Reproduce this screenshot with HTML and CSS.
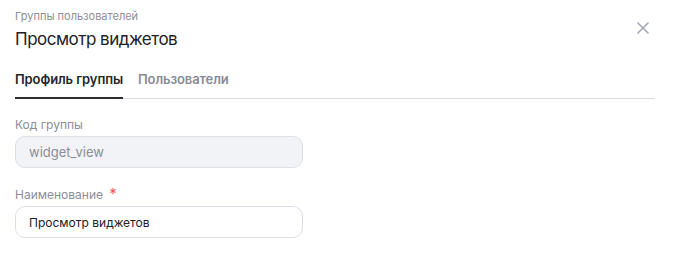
FILE: index.html
```html
<!DOCTYPE html>
<html lang="ru">
<head>
<meta charset="utf-8">
<link rel="stylesheet" href="styles.css">
</head>
<body>
<div class="dialog">
  <header class="head">
    <div class="titles">
      <div class="crumb">Группы пользователей</div>
      <h1 class="title">Просмотр виджетов</h1>
    </div>
    <button class="close" aria-label="Закрыть">
      <svg width="12" height="12" viewBox="0 0 12 12"><path d="M1 1L11 11M11 1L1 11" stroke="#a3a6b8" stroke-width="1.6" stroke-linecap="round"/></svg>
    </button>
  </header>
  <nav class="tabs">
    <span class="tab active">Профиль группы</span>
    <span class="tab">Пользователи</span>
  </nav>
  <div class="form">
    <div class="field">
      <label class="label">Код группы</label>
      <div class="input disabled">widget_view</div>
    </div>
    <div class="field">
      <label class="label">Наименование <span class="req">*</span></label>
      <div class="input">Просмотр виджетов</div>
    </div>
  </div>
</div>
</body>
</html>
```
FILE: styles.css
```css
* { box-sizing: border-box; }
html, body { margin: 0; padding: 0; background: #fff; }
body { font-family: Inter, "Noto Sans", sans-serif; color: #1d2026; }
.dialog { padding: 8px 23px 0 15px; width: 678px; }
.head { display: flex; justify-content: space-between; align-items: flex-start; }
.crumb { font-size: 11px; line-height: 16px; color: #8b8e99; }
.title { margin: 3px 0 0; font-size: 17px; line-height: 24px; font-weight: 400; letter-spacing: -0.5px; color: #1d2026; }
.close { margin: 14px 6px 0 0; padding: 0; border: 0; background: none; width: 12px; height: 12px; display: flex; }
.tabs { display: flex; gap: 15px; margin-top: 19px; border-bottom: 1px solid #dadde3; }
.tab { font-size: 13px; font-weight: 600; line-height: 18px; padding-bottom: 10px; color: #868a99; letter-spacing: -0.1px; }
.tab.active { color: #24262b; border-bottom: 2px solid #2b2d33; margin-bottom: -1px; padding-bottom: 9px; }
.form { padding-top: 18px; display: flex; flex-direction: column; gap: 19px; }
.field { display: flex; flex-direction: column; gap: 3px; width: 288px; }
.label { font-size: 12px; line-height: 16px; color: #8b8e99; }
.req { color: #f0575b; font-size: 15px; line-height: 12px; margin-left: 3px; }
.input { height: 32px; border: 1px solid #dcdfe6; border-radius: 10px; padding: 0 13px; display: flex; align-items: center; font-size: 12px; color: #1d2026; background: #fff; }
.input.disabled { background: #f2f3f6; color: #8b8e99; font-size: 13px; }
```
